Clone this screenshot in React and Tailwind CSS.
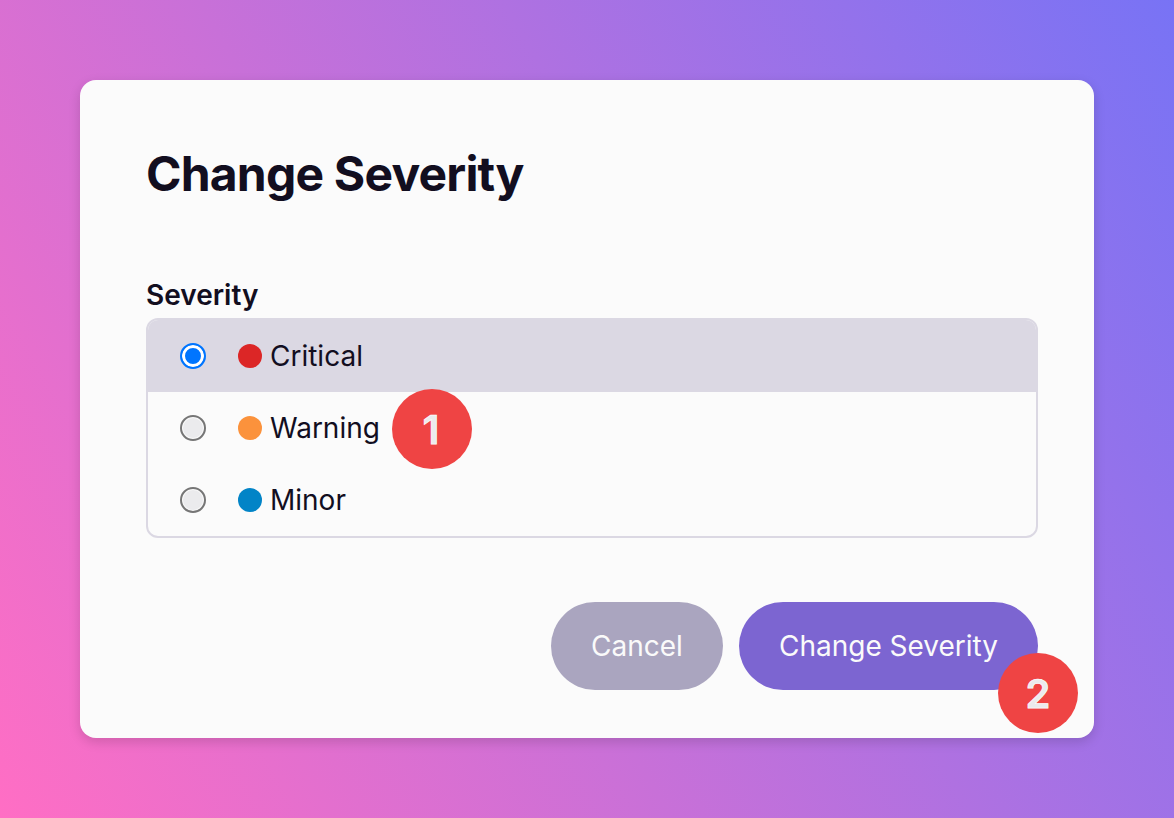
import React, { useState } from "react";

const SEVERITIES = [
  { name: "Critical", dot: "bg-[#dc2626]" },
  { name: "Warning", dot: "bg-[#fb923c]", step: 1 },
  { name: "Minor", dot: "bg-[#0284c7]" },
];

function StepBadge({ number, className }) {
  return (
    <span
      className={`absolute flex size-20 items-center justify-center rounded-full bg-[#ef4444] pt-0.5 text-[40px] leading-none font-semibold text-[#ebebed] [-webkit-text-stroke:0.75px_#fbfbfb] ${className}`}
    >
      {number}
    </span>
  );
}

function SeverityOption({ severity, selected, onSelect }) {
  return (
    <label
      className={`flex h-[72px] items-center pl-8 first:rounded-t-[10px] last:rounded-b-[10px] ${selected ? "bg-[#dbd8e3]" : ""}`}
    >
      <input
        type="radio"
        name="severity"
        checked={selected}
        onChange={() => onSelect(severity.name)}
        className="size-[26px] appearance-none rounded-full border-2 border-[#767676] bg-[#ebebed] shadow-[inset_0_0_0_1px_#fafafa] checked:border-[#0075ff] checked:bg-[#0075ff] checked:shadow-[inset_0_0_0_3px_#ffffff]"
      />
      <span className={`ml-8 size-6 rounded-full ${severity.dot}`} />
      <span className="relative ml-2 text-[28px] leading-10">
        {severity.name}
        {severity.step && (
          <StepBadge number={severity.step} className="top-[-19px] left-[122px] pr-0.5" />
        )}
      </span>
    </label>
  );
}

export default function App() {
  const [selected, setSelected] = useState("Critical");

  return (
    <main className="h-screen overflow-hidden bg-[linear-gradient(60deg,#ff6ec4,#7873f5)] p-20 font-['Inter',sans-serif] text-[#120e1f]">
      <section className="flex h-[658px] flex-col rounded-2xl bg-[#fbfbfb] px-[66px] pt-[62px] shadow-[0_4px_12px_rgba(0,0,0,0.15)]">
        <h1 className="text-5xl leading-[64px] font-bold tracking-[-0.8px]">Change Severity</h1>
        <h2 className="mt-[69px] text-[28px] leading-10 font-semibold">Severity</h2>
        <div className="mt-[3px] w-[892px] rounded-xl border-2 border-[#dbd8e3]">
          {SEVERITIES.map((severity) => (
            <SeverityOption
              key={severity.name}
              severity={severity}
              selected={severity.name === selected}
              onSelect={setSelected}
            />
          ))}
        </div>
        <div className="mt-16 flex w-[892px] justify-end gap-4 text-[28px] text-[#fafafa]">
          <button className="h-[88px] w-[172px] rounded-full bg-[#aaa5bf]">Cancel</button>
          <button className="relative h-[88px] w-[299px] rounded-full bg-[#7c65d1]">
            Change Severity
            <StepBadge number={2} className="top-[51px] -right-10" />
          </button>
        </div>
      </section>
    </main>
  );
}
